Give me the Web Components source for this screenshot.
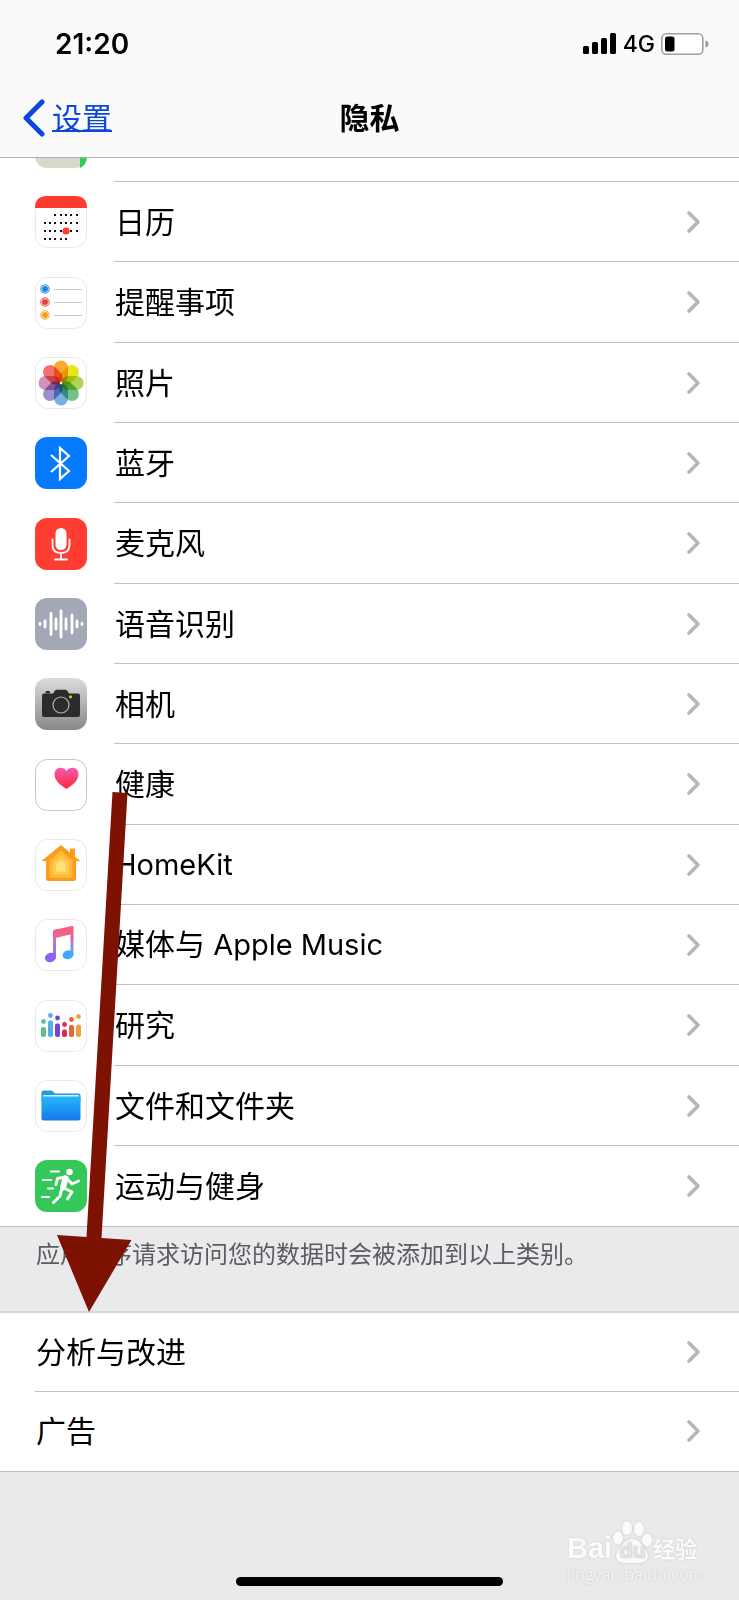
<!DOCTYPE html>
<html lang="zh-CN">
<head>
<meta charset="utf-8">
<meta name="viewport" content="width=device-width, initial-scale=1">
<title>隐私</title>
<style>
html, body { margin: 0; }
body { font-family: Inter, "Noto Sans CJK SC", sans-serif; color: #000; background: #eaeaec; }
</style>
</head>
<body>
<privacy-screen></privacy-screen>

<script>
const define = (name, html, setup) => {
  const template = document.createElement('template');
  template.innerHTML = html;
  customElements.define(name, class extends HTMLElement {
    constructor() {
      super();
      this.attachShadow({ mode: 'open' }).append(template.content.cloneNode(true));
    }
    connectedCallback() { if (setup) setup(this, this.shadowRoot); }
  });
};

const dots = (xs, y) => xs.map(x => `<rect x="${x - 1}" y="${y - 1}" width="2" height="2"/>`).join('');
const days = [10, 15, 20, 26, 31, 36, 42];
const petals = ['#f9a11b', '#ebe000', '#a5cf45', '#62bd80', '#68a8de', '#9484c6', '#cc86b8', '#f2625a'];

const plain = '<rect x=".5" y=".5" width="51" height="51" rx="12" fill="#fff" stroke="#e9e9e9"/>';
const filled = color => `<rect width="52" height="52" rx="12" fill="${color}"/>`;

const icons = {
  maps: `${filled('#d9d8ca')}<path d="M45 30h7v10q0 9-7 12z" fill="#32cc58"/>`,
  calendar: `${plain}<path d="M0 12Q0 0 12 0h28q12 0 12 12z" fill="#ff3b30"/>
    <g fill="#111">${dots(days.slice(2), 19)}${dots(days, 27)}${dots(days, 35)}${dots(days.slice(0, 5), 43)}</g>
    <circle cx="31" cy="35" r="3.6" fill="#ff3b30"/>`,
  reminders: plain + [['#1a84ea', 12], ['#e8413c', 25], ['#f0a020', 38]].map(([c, y]) =>
    `<circle cx="10" cy="${y}" r="4.2" fill="#fff" stroke="${c}"/><circle cx="10" cy="${y}" r="3" fill="${c}"/>
     <path d="M19 ${y + .5}h28" stroke="#c9c9c9"/>`).join(''),
  photos: `${plain}<g style="isolation:isolate">${petals.map((c, i) =>
    `<rect x="19" y="3.5" width="14" height="22" rx="7" fill="${c}" fill-opacity=".9" transform="rotate(${i * 45} 26 26)" style="mix-blend-mode:multiply"/>`).join('')}</g>
    <circle cx="26" cy="26" r="1.2" fill="#fff"/>`,
  bluetooth: `${filled('#067aff')}<path d="M16 18l18 16-9 8V11l9 8-18 16" fill="none" stroke="#fff" stroke-width="2.2"/>`,
  microphone: `${filled('#ff3d33')}<rect x="20.5" y="10" width="11" height="22" rx="5.5" fill="#fff"/>
    <path d="M17.5 21.5V27q0 8 8.500 8t8.500-8v-5.500M26 35v6M20 41.500h12" fill="none" stroke="#fff" stroke-width="1.8" stroke-linecap="round"/>`,
  speech: `${filled('#a4a8b6')}<path d="M5 25.500v1M10 23v6M16 15.500v21M21 21v10M26 13v26M31 21v10M37 17v18M42 23v6M47 25.500v1" stroke="#fff" stroke-width="2.8" stroke-linecap="round"/>`,
  camera: `<defs><linearGradient id="g" x2="0" y2="1"><stop stop-color="#dcdcde"/><stop offset="1" stop-color="#88888b"/></linearGradient></defs>
    ${filled('url(#g)')}<rect x="10.500" y="13" width="4.500" height="2.500" rx="1" fill="#2b2b2d"/>
    <path d="M9 15.500h9l2-3q.5-.8 2-.8h8q1.500 0 2 .8l2 3h9q2 0 2 2V37q0 2-2 2H9q-2 0-2-2V17.500q0-2 2-2z" fill="#2b2b2d"/>
    <circle cx="26" cy="27" r="8" fill="none" stroke="#b3b3b5" stroke-width="1.200"/><circle cx="35.500" cy="19" r="1.400" fill="#ffd800"/>`,
  health: `<defs><linearGradient id="g" x2="0" y2="1"><stop stop-color="#f759b4"/><stop offset="1" stop-color="#fb2738"/></linearGradient></defs>
    <rect x=".5" y=".5" width="51" height="51" rx="12" fill="#fff" stroke="#c6c6c8"/>
    <path d="M31.500 30Q19.500 23 19.500 15.500 19.500 9 25.500 8.700q4 0 6 3.300 2-3.300 6-3.300 6 .3 6 6.800Q43.500 23 31.500 30z" fill="url(#g)"/>`,
  home: `${plain}<path d="M26 6l9 7.500V10.500q0-1 1-1h3q1 0 1 1v7.200l5.500 4.300H41v18q0 2-2 2H13q-2 0-2-2V22H6.500z" fill="#fb9a1c"/>
    <path d="M26 11.500L14.500 21.500v16q0 1.500 1.500 1.500h20q1.500 0 1.500-1.500v-16z" fill="#ffb83a"/>
    <path d="M26 16l-8 7v12.500h16V23z" fill="#ffcb4c"/><path d="M26 21l-5 4v7.500h10V25z" fill="#ffe07a"/>`,
  music: `<defs><linearGradient id="g" gradientUnits="userSpaceOnUse" x1="30" y1="7" x2="26" y2="43"><stop stop-color="#fb5c74"/><stop offset=".35" stop-color="#e666a0"/><stop offset=".7" stop-color="#8f7cf5"/><stop offset="1" stop-color="#8a5cf6"/></linearGradient>
    <linearGradient id="h" gradientUnits="userSpaceOnUse" x1="0" y1="16" x2="0" y2="40"><stop stop-color="#f0609a"/><stop offset=".6" stop-color="#6a9cf0"/><stop offset="1" stop-color="#35b4fa"/></linearGradient></defs>
    ${plain}<path d="M18 12.500q0-1.500 1.500-1.800l17.500-3.700q1.500-.3 1.500 1.200V20h-3v-4.500L21 18.700V38h-3z" fill="url(#g)"/>
    <ellipse cx="15.500" cy="38.500" rx="5.700" ry="4.600" transform="rotate(-15 15.500 38.500)" fill="#8a62f6"/>
    <path d="M35.500 18h3v18h-3z" fill="url(#h)"/><ellipse cx="33" cy="35.800" rx="5.500" ry="4.400" transform="rotate(-15 33 35.800)" fill="#45a6f8"/>`,
  research: plain + [[8.500, 27, 21.500, '#5cc489'], [15.500, 20.500, 15.500, '#57aee6'], [22.500, 23.500, 18, '#7446cf'],
    [29.500, 29.500, 24.500, '#d92b4b'], [36.500, 25, 19.500, '#ee6035'], [43.500, 24.500, 16.500, '#f0a03a']].map(([x, t, d, c]) =>
    `<rect x="${x - 2.500}" y="${t}" width="5" height="${37 - t}" rx="2" fill="${c}"/><circle cx="${x}" cy="${d}" r="2.400" fill="${c}"/>`).join(''),
  files: `<defs><linearGradient id="g" x2="0" y2="1"><stop stop-color="#27b6f8"/><stop offset="1" stop-color="#1877ee"/></linearGradient></defs>
    ${plain}<path d="M6.500 12.500q0-2 2-2h7q1.500 0 2.500 1l2 2h23.500q2 0 2 2V22h-39z" fill="#1f9be4"/>
    <rect x="8" y="15" width="36" height="4" rx="1" fill="#d9f1ff"/>
    <path d="M6.500 16.500h39v22q0 2-2 2h-35q-2 0-2-2z" fill="url(#g)"/>`,
  fitness: `${filled('#34c759')}<g fill="none" stroke="#fff" stroke-linecap="round" stroke-linejoin="round">
    <path d="M16 11.500h8M8 20h8M13 28.500h5M7 37h7" stroke-width="2"/>
    <path d="M30 17l-7.500 1.500-1.500 6M32 18.500l5 5.500 6.500-3M29 28l8 4-4.500 7M26.500 29.500L25 36l-6.500 6.500" stroke-width="3"/>
    <path d="M30.500 18.500l-2.500 9" stroke-width="6"/></g><circle cx="34.500" cy="12" r="3.300" fill="#fff"/>`
};

define('app-icon', `
<style>
:host { display: block; flex: none; width: 52px; height: 52px; }
svg { display: block; }
</style>
<svg width="52" height="52" viewBox="0 0 52 52" aria-hidden="true"></svg>`,
(el, root) => { root.querySelector('svg').innerHTML = icons[el.getAttribute('name')]; });

define('status-bar', `
<style>
:host { display: flex; align-items: center; justify-content: space-between; height: 88px; padding: 0 30px 0 55px; box-sizing: border-box; }
time { font-size: 28px; font-weight: 600; line-height: 32px; }
.right { display: flex; align-items: center; gap: 6px; }
.net { font-size: 23px; font-weight: 500; line-height: 28px; }
svg { display: block; }
</style>
<time>21:20</time>
<div class="right">
  <svg width="34" height="22" viewBox="0 0 34 22" aria-hidden="true">
    <rect x="0" y="13" width="6" height="8" rx="1.500"/><rect x="9" y="9" width="6" height="12" rx="1.500"/>
    <rect x="18" y="5" width="6" height="16" rx="1.500"/><rect x="27" y="0" width="6" height="21" rx="1.500"/>
  </svg>
  <span class="net">4G</span>
  <svg width="48" height="22" viewBox="0 0 48 22" aria-hidden="true">
    <rect x=".8" y=".8" width="41" height="20.400" rx="4.500" fill="#fff" stroke="#a0a0a0" stroke-width="1.600"/>
    <rect x="4" y="3.500" width="9.500" height="15" rx="2.500"/><path d="M44.500 7.500q3 1 3 3.500t-3 3.500z" fill="#999"/>
  </svg>
</div>`);

define('nav-bar', `
<style>
:host { display: grid; grid-template-columns: 1fr auto 1fr; align-items: center; height: 69px; padding: 0 22px 10px; box-sizing: border-box; }
a { display: flex; align-items: center; gap: 6px; justify-self: start; color: #0b47d9; font-size: 30px; line-height: 44px; text-decoration: none; }
a span { text-decoration: underline; text-decoration-thickness: 2px; text-underline-offset: 1px; text-decoration-skip-ink: none; }
h1 { margin: 0; font-size: 30px; line-height: 44px; font-weight: 600; }
svg { display: block; }
</style>
<a href="#settings">
  <svg width="24" height="38" viewBox="0 0 24 38" fill="none" stroke="currentColor" stroke-width="5" stroke-linecap="round" stroke-linejoin="round" aria-hidden="true"><path d="M20 3L4 19l16 16"/></svg>
  <span><slot name="back"></slot></span>
</a>
<h1><slot></slot></h1>`);

define('settings-row', `
<style>
:host { display: flex; min-height: 80px; box-sizing: border-box; padding-left: 35px; background: #fff; }
a { display: flex; flex: 1; gap: 27px; align-items: center; color: inherit; text-decoration: none; }
.body { display: flex; flex: 1; align-self: stretch; align-items: center; justify-content: space-between; padding: 0 38px 0 1px; border-bottom: 1px solid #c0c0c4; }
.label { font-size: 30px; line-height: 44px; }
:host(:last-of-type) .body { border-bottom-color: transparent; }
:host([partial]) { min-height: 0; height: 24px; overflow: hidden; }
:host([partial]) a { align-items: flex-end; }
:host([partial]) .body svg { display: none; }
:host([partial]) ::slotted(app-icon) { margin-bottom: 14px; }
::slotted(span[lang]) { font-size: 29px; }
svg { display: block; }
</style>
<a href="#"><slot name="icon"></slot>
  <span class="body"><span class="label"><slot></slot></span>
  <svg width="15" height="24" viewBox="0 0 15 24" fill="none" stroke="#b6b6b8" stroke-width="3.600" stroke-linecap="round" stroke-linejoin="round" aria-hidden="true"><path d="M3 3l9 9-9 9"/></svg></span>
</a>`);

define('settings-group', `
<style>
:host { display: flex; flex-direction: column; border-bottom: 1px solid #bcbcc4; background: #fff; }
:host([ruled]) { border-top: 2px solid #d6d6d8; }
:host([ruled]) ::slotted(settings-row) { min-height: 79px; }
:host([icons]) ::slotted(:nth-child(3n)) { min-height: 81px; }
</style><slot></slot>`);

define('group-note', `
<style>
:host { display: block; padding: 10px 36px 38px; font-size: 24px; line-height: 36px; color: #5c5c60; }
</style><slot></slot>`);

define('baidu-mark', `
<style>
:host { display: block; width: 136px; color: #fbfbfc; font-family: "Open Sans", "Noto Sans CJK SC", sans-serif; text-shadow: 0 0 2px #c4c4c6; }
.logo { display: flex; align-items: flex-end; height: 52px; }
.word { font: 700 29px/32px "Liberation Sans", sans-serif; }
.paw { position: relative; width: 41px; height: 46px; }
.paw svg { display: block; filter: drop-shadow(0 0 1px #c4c4c6); }
.du { position: absolute; left: 7px; bottom: 1px; font: 700 22px/24px "Liberation Sans", sans-serif; color: #e4e4e6; text-shadow: 0 0 2px #a8a8aa; }
.cn { font-size: 22px; line-height: 32px; font-weight: 700; }
.url { font-size: 16px; line-height: 20px; color: #f4f4f6; }
</style>
<div class="logo"><span class="word">Bai</span>
  <span class="paw"><svg width="41" height="46" viewBox="0 0 41 46" fill="#fbfbfc"><ellipse cx="6" cy="20" rx="5" ry="6.500"/><ellipse cx="15" cy="10" rx="5" ry="7"/><ellipse cx="27" cy="11" rx="5" ry="7"/><ellipse cx="35" cy="22" rx="5" ry="6.500"/><path d="M20 21q5 0 9 5 6 5 7 11 0 8-9 8H13q-9 0-9-8 1-6 7-11 4-5 9-5z"/></svg><span class="du">du</span></span>
  <span class="cn">经验</span></div>
<div class="url">jingyan.baidu.com</div>`);

define('pointer-arrow', `
<style>
:host { display: block; pointer-events: none; }
svg { display: block; }
</style>
<svg width="76" height="522" viewBox="0 0 76 522" aria-hidden="true"><path d="M56.500 1L71.500 2 45.500 447 75.500 449 33 521 1 444 30.500 446z" fill="#7d1102"/></svg>`);

define('privacy-screen', `
<style>
:host { display: flex; flex-direction: column; position: relative; min-height: 100vh; box-sizing: border-box; padding-bottom: 14px; background: #eaeaec; }
header { background: #fafafa; border-bottom: 1px solid #b0b0b2; }
.home { width: 36%; height: 9px; margin: auto auto 0; border-radius: 5px; background: #000; }
pointer-arrow { position: absolute; left: 56px; top: 791px; }
baidu-mark { position: absolute; right: 36px; bottom: 16px; }
</style>
<header>
  <status-bar></status-bar>
  <nav-bar><span slot="back">设置</span>隐私</nav-bar>
</header>
<settings-group icons>
  <settings-row partial><app-icon slot="icon" name="maps"></app-icon></settings-row>
  <settings-row><app-icon slot="icon" name="calendar"></app-icon>日历</settings-row>
  <settings-row><app-icon slot="icon" name="reminders"></app-icon>提醒事项</settings-row>
  <settings-row><app-icon slot="icon" name="photos"></app-icon>照片</settings-row>
  <settings-row><app-icon slot="icon" name="bluetooth"></app-icon>蓝牙</settings-row>
  <settings-row><app-icon slot="icon" name="microphone"></app-icon>麦克风</settings-row>
  <settings-row><app-icon slot="icon" name="speech"></app-icon>语音识别</settings-row>
  <settings-row><app-icon slot="icon" name="camera"></app-icon>相机</settings-row>
  <settings-row><app-icon slot="icon" name="health"></app-icon>健康</settings-row>
  <settings-row><app-icon slot="icon" name="home"></app-icon><span lang="en">HomeKit</span></settings-row>
  <settings-row><app-icon slot="icon" name="music"></app-icon>媒体与<span lang="en"> Apple Music</span></settings-row>
  <settings-row><app-icon slot="icon" name="research"></app-icon>研究</settings-row>
  <settings-row><app-icon slot="icon" name="files"></app-icon>文件和文件夹</settings-row>
  <settings-row><app-icon slot="icon" name="fitness"></app-icon>运动与健身</settings-row>
</settings-group>
<group-note>应用程序请求访问您的数据时会被添加到以上类别。</group-note>
<settings-group ruled>
  <settings-row>分析与改进</settings-row>
  <settings-row>广告</settings-row>
</settings-group>
<div class="home"></div>
<baidu-mark></baidu-mark>
<pointer-arrow></pointer-arrow>`);
</script>
</body>
</html>
